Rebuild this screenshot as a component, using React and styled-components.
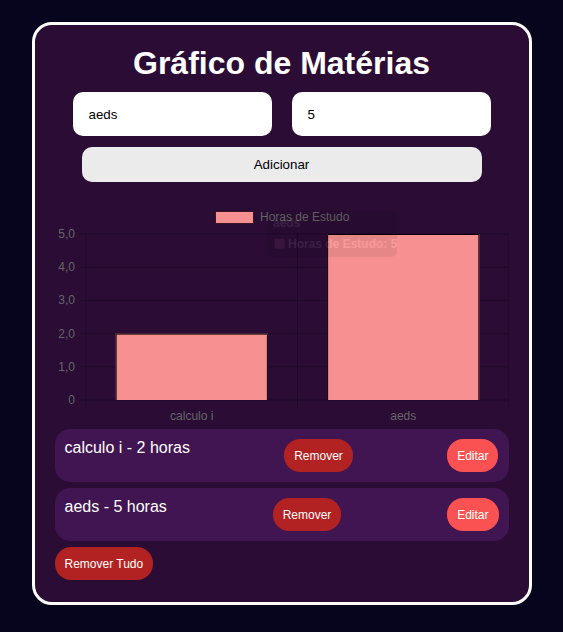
import React from 'react';
import styled, {createGlobalStyle} from 'styled-components';

const GlobalStyle = createGlobalStyle`
    body {
        margin: 0;
        background: #07051d;
        font-family: 'Liberation Sans', Arial, sans-serif;
    }
`;

const Page = styled.div`
    padding: 22px 0;
`;

const Card = styled.div`
    width: 500px;
    box-sizing: border-box;
    margin: 0 auto;
    background: #2a0c35;
    border: 3px solid #ffffff;
    border-radius: 20px;
    padding: 20px 20px 22px;
    display: flex;
    flex-direction: column;
`;

const Title = styled.h1`
    margin: 0;
    color: #ffffff;
    font-size: 32px;
    font-weight: bold;
    text-align: center;
`;

const InputRow = styled.div`
    display: flex;
    gap: 20px;
    width: 418px;
    margin: 10px auto 0;
`;

const Field = styled.input`
    flex: 1;
    min-width: 0;
    height: 44px;
    box-sizing: border-box;
    border: none;
    border-radius: 10px;
    padding: 0 16px;
    background: #ffffff;
    color: #000;
    font-family: 'Liberation Sans', Arial, sans-serif;
    font-size: 13.33px;
    outline: none;
`;

const AddButton = styled.button`
    width: 400px;
    height: 35px;
    margin: 11px auto 0;
    border: none;
    border-radius: 10px;
    background: #ebebeb;
    color: #000;
    font-family: 'Liberation Sans', Arial, sans-serif;
    font-size: 13.33px;
`;

const ChartBox = styled.div`
    margin-top: 18px;
    height: 225px;
`;

const List = styled.ul`
    list-style: none;
    margin: 4px 0 0;
    padding: 0;
    display: flex;
    flex-direction: column;
    gap: 6px;
`;

const Item = styled.li`
    display: flex;
    justify-content: space-between;
    align-items: flex-start;
    background: #411551;
    border-radius: 15px;
    padding: 10px;
    color: #ffffff;
    font-size: 16px;
    line-height: 18px;
`;

const Pill = styled.button`
    height: 33px;
    border: none;
    border-radius: 16px;
    padding: 0 10px;
    background: ${props => props.bg};
    color: #ffffff;
    font-family: 'Liberation Sans', Arial, sans-serif;
    font-size: 12px;
`;

const ClearButton = styled(Pill)`
    align-self: flex-start;
    margin-top: 6px;
`;

const BAR = '#f79191';
const GRID = 'rgba(0,0,0,0.22)';
const data = [
    {name: 'calculo i', hours: 2},
    {name: 'aeds', hours: 5},
];

const Chart = () => {
    const left = 31, right = 454, bottom = 200, top = 34;
    const unit = (bottom - top) / 5;
    const slot = (right - left) / data.length;
    const barW = slot * 0.72;
    const ticks = [0, 1, 2, 3, 4, 5];
    return (
        <svg width="454" height="225" viewBox="0 0 454 225" fontFamily="'Liberation Sans', Arial, sans-serif">
            <rect x="160.5" y="11.5" width="38" height="12" fill={BAR} stroke="#3a1420" />
            <text x="205" y="21" fontSize="12" fill="#666">Horas de Estudo</text>
            {ticks.map(t => {
                const y = bottom - t * unit;
                return (
                    <g key={t}>
                        <line x1="25" x2={right} y1={y} y2={y} stroke={GRID} />
                        <text x="20" y={y + 4} fontSize="12" fill="#666" textAnchor="end">
                            {t === 0 ? '0' : `${t},0`}
                        </text>
                    </g>
                );
            })}
            {[0, 1, 2].map(i => (
                <line key={i} x1={left + i * slot} x2={left + i * slot} y1={top} y2={208} stroke={GRID} />
            ))}
            {data.map((d, i) => {
                const cx = left + slot * (i + 0.5);
                const h = d.hours * unit;
                const x = cx - barW / 2;
                return (
                    <g key={d.name}>
                        <rect x={x} y={bottom - h} width={barW} height={h} fill={BAR} />
                        <path d={`M${x + 0.5} ${bottom} V${bottom - h + 0.5} H${x + barW - 0.5} V${bottom}`} fill="none" stroke="#000" />
                        <text x={cx} y="220" fontSize="12" fill="#666" textAnchor="middle">{d.name}</text>
                    </g>
                );
            })}
            <g opacity="0.08">
                <rect x="212" y="10" width="130" height="47" rx="6" fill="rgba(0,0,0,0.8)" />
                <text x="218" y="27" fontSize="12" fontWeight="bold" fill="#fff">aeds</text>
                <rect x="219" y="38" width="11" height="11" fill={BAR} stroke="#000" />
                <text x="233" y="48" fontSize="12" fontWeight="bold" fill="#fff">Horas de Estudo: 5</text>
            </g>
        </svg>
    );
};

const App = () => {
    return <Page>
        <GlobalStyle />
        <Card>
            <Title>Gráfico de Matérias</Title>
            <InputRow>
                <Field defaultValue="aeds" />
                <Field defaultValue="5" />
            </InputRow>
            <AddButton>Adicionar</AddButton>
            <ChartBox>
                <Chart />
            </ChartBox>
            <List>
                {data.map(d => (
                    <Item key={d.name}>
                        <span>{d.name} - {d.hours} horas</span>
                        <Pill bg="#b22222">Remover</Pill>
                        <Pill bg="#fa5252">Editar</Pill>
                    </Item>
                ))}
            </List>
            <ClearButton bg="#b22222">Remover Tudo</ClearButton>
        </Card>
    </Page>
}

export default App;
